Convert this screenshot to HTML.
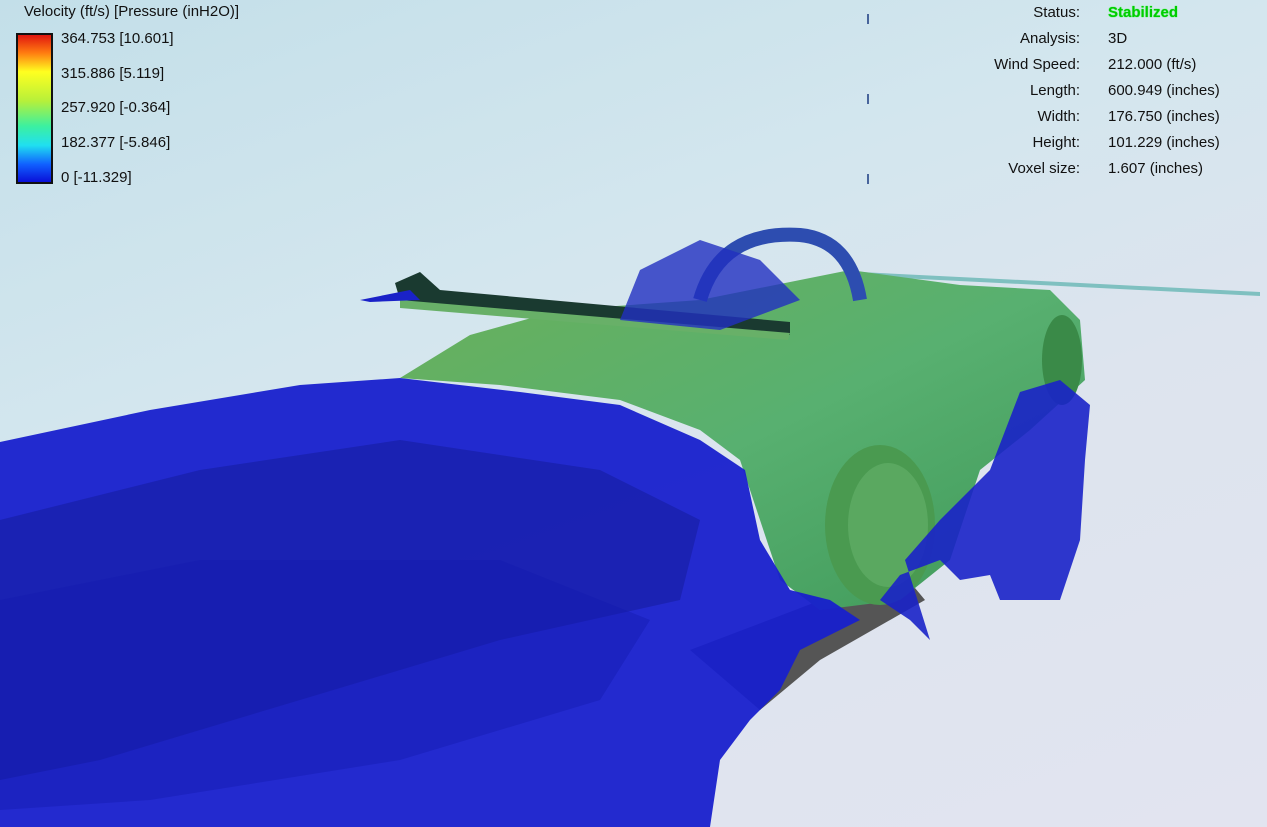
<!DOCTYPE html>
<html><head><meta charset="utf-8"><style>
html,body{margin:0;padding:0;width:1267px;height:827px;overflow:hidden}
body{position:relative;font-family:"Liberation Sans",sans-serif;color:#111;
background:linear-gradient(160deg,#c3dfe9 0%,#d3e6ee 35%,#dde4ee 60%,#e2e4f0 100%)}
svg{position:absolute;left:0;top:0}
.t{position:absolute;font-size:15px;white-space:nowrap}
.bar{position:absolute;left:16px;top:33px;width:33px;height:147px;border:2px solid #111;
background:linear-gradient(#e0160f 0%,#ff7a10 12%,#ffff20 25%,#b6f03a 45%,#3cf0a0 62%,#20e0f0 75%,#1060ff 88%,#0a10d8 100%)}
.r{position:absolute;right:187px;text-align:right;font-size:15px}
.v{position:absolute;left:1108px;font-size:15px}
</style></head><body>
<svg width="1267" height="827" viewBox="0 0 1267 827">
<defs>
<linearGradient id="g" x1="0" y1="0" x2="1" y2="1"><stop offset="0" stop-color="#6ab05a"/><stop offset=".5" stop-color="#58b070"/><stop offset="1" stop-color="#3e9858"/></linearGradient>
</defs>
<polygon points="860,272 1260,292 1260,296 860,276" fill="#7fc0c0"/>
<polygon points="690,650 900,570 925,600 820,660 760,710" fill="#555"/>
<polygon points="400,378 470,335 560,310 700,300 850,270 960,285 1050,290 1080,320 1085,380 1030,430 980,470 950,560 900,600 820,610 780,580 760,520 740,460 700,430 620,400 500,385" fill="url(#g)"/>
<ellipse cx="880" cy="525" rx="55" ry="80" fill="#4a9a50"/>
<ellipse cx="888" cy="525" rx="40" ry="62" fill="#5aa860"/>
<ellipse cx="1062" cy="360" rx="20" ry="45" fill="#3a8a48"/>
<polygon points="395,283 420,272 440,290 790,322 790,335 440,305 400,300" fill="#1a3a30"/>
<polygon points="400,300 790,333 788,340 400,308" fill="#68b068"/>
<path d="M700 300 Q 720 230 800 235 Q 850 240 860 300" stroke="#2d4db0" stroke-width="14" fill="none"/>
<polygon points="640,270 700,240 760,260 800,300 720,330 620,320" fill="#2030c0" opacity=".8"/>
<polygon points="0,442 150,410 300,385 400,378 520,392 620,405 700,440 745,470 760,540 790,590 830,600 860,620 800,650 780,690 750,720 720,760 710,827 0,827" fill="#1820cc" opacity=".95"/>
<polygon points="0,520 200,470 400,440 600,470 700,520 680,600 500,640 300,700 100,760 0,780" fill="#0e168a" opacity=".4"/>
<polygon points="0,600 200,560 500,560 650,620 600,700 400,760 150,800 0,810" fill="#131bb0" opacity=".45"/>
<polygon points="1020,392 1060,380 1090,405 1085,460 1080,540 1060,600 1000,600 990,575 960,580 940,560 900,575 880,600 910,620 930,640 905,560 940,520 990,470" fill="#1a22c8" opacity=".9"/>
<polygon points="360,300 410,290 420,300 370,302" fill="#1a22c8"/>
<line x1="868" y1="14" x2="868" y2="250" stroke="#1a3a80" stroke-width="1.5" stroke-dasharray="10,70"/>
</svg>
<div class="t" style="left:24px;top:3px">Velocity (ft/s) [Pressure (inH2O)]</div>
<div class="bar"></div>
<div class="t" style="left:61px;top:30px">364.753 [10.601]</div>
<div class="t" style="left:61px;top:65px">315.886 [5.119]</div>
<div class="t" style="left:61px;top:99px">257.920 [-0.364]</div>
<div class="t" style="left:61px;top:134px">182.377 [-5.846]</div>
<div class="t" style="left:61px;top:169px">0 [-11.329]</div>
<div class="r" style="top:4px">Status:</div><div class="v" style="top:4px;color:#0c0;font-weight:bold;text-shadow:0 0 1px #0f0">Stabilized</div>
<div class="r" style="top:30px">Analysis:</div><div class="v" style="top:30px">3D</div>
<div class="r" style="top:56px">Wind Speed:</div><div class="v" style="top:56px">212.000 (ft/s)</div>
<div class="r" style="top:82px">Length:</div><div class="v" style="top:82px">600.949 (inches)</div>
<div class="r" style="top:108px">Width:</div><div class="v" style="top:108px">176.750 (inches)</div>
<div class="r" style="top:134px">Height:</div><div class="v" style="top:134px">101.229 (inches)</div>
<div class="r" style="top:160px">Voxel size:</div><div class="v" style="top:160px">1.607 (inches)</div>
</body></html>
